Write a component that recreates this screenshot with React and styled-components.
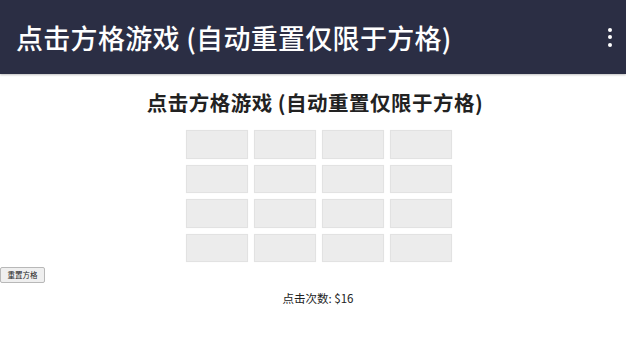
import React, { useState } from "react";
import styled, { createGlobalStyle } from "styled-components";

const Global = createGlobalStyle`
  html, body { margin: 0; padding: 0; background: #ffffff; }
  body { font-family: "Noto Sans CJK SC", "Noto Sans", sans-serif; }
`;

const Page = styled.div`
  width: 626px;
  height: 359px;
  overflow: hidden;
  background: #fff;
`;

const AppBar = styled.header`
  height: 74px;
  background: #2b2e44;
  display: flex;
  align-items: center;
  justify-content: space-between;
  padding: 0 10px 0 16px;
  box-sizing: border-box;
  box-shadow: 0 1px 2px rgba(0,0,0,0.25);
`;

const AppTitle = styled.h1`
  margin: 0;
  color: #ffffff;
  font-family: "Noto Sans CJK SC", sans-serif;
  font-weight: 500;
  font-size: 27px;
  letter-spacing: 0.3px;
  line-height: 1;
`;

const Kebab = styled.button`
  background: none;
  border: none;
  padding: 0;
  width: 12px;
  display: flex;
  flex-direction: column;
  align-items: center;
  gap: 3.5px;
  cursor: pointer;
`;

const Dot = styled.span`
  width: 4px;
  height: 4px;
  border-radius: 50%;
  background: #ffffff;
`;

const Main = styled.main`
  display: flex;
  flex-direction: column;
`;

const Center = styled.div`
  display: flex;
  flex-direction: column;
  align-items: center;
  padding-left: ${(p) => p.$shift || 10}px;
`;

const Heading = styled.h2`
  margin: 16px 0 0;
  font-family: "Noto Sans CJK SC", sans-serif;
  font-weight: 700;
  font-size: 20.5px;
  letter-spacing: 0.5px;
  line-height: 24px;
  color: #222;
`;

const Grid = styled.div`
  margin-top: 16px;
  display: grid;
  grid-template-columns: repeat(4, 62px);
  grid-auto-rows: 28.5px;
  column-gap: 6px;
  row-gap: 6px;
`;

const Cell = styled.div`
  box-sizing: border-box;
  background: ${(p) => (p.$on ? "#4caf50" : "#ececec")};
  border: 1px solid #e2e2e2;
  box-shadow: 0 0 1px rgba(0,0,0,0.05);
  cursor: pointer;
`;

const ResetRow = styled.div`
  margin-top: 5px;
  display: flex;
`;

const ResetButton = styled.button`
  height: 16px;
  width: 45px;
  padding: 0;
  font-family: "Noto Sans CJK SC", sans-serif;
  font-size: 7.5px;
  color: #222;
  background: #efefef;
  border: 1px solid #b8b8b8;
  border-radius: 2px;
  line-height: 1;
`;

const Count = styled.p`
  margin: 8px 0 0;
  font-family: "Noto Sans CJK SC", sans-serif;
  font-size: 11.5px;
  color: #222;
  line-height: 14px;
`;

export default function App() {
  const [cells, setCells] = useState(Array(16).fill(false));
  return (
    <Page>
      <Global />
      <AppBar>
        <AppTitle>点击方格游戏 (自动重置仅限于方格)</AppTitle>
        <Kebab aria-label="menu">
          <Dot />
          <Dot />
          <Dot />
        </Kebab>
      </AppBar>
      <Main>
        <Center $shift={4}>
          <Heading>点击方格游戏 (自动重置仅限于方格)</Heading>
        </Center>
        <Center $shift={12}>
          <Grid>
            {cells.map((on, i) => (
              <Cell key={i} $on={on} onClick={() => setCells((c) => c.map((v, j) => (j === i ? !v : v)))} />
            ))}
          </Grid>
        </Center>
        <ResetRow>
          <ResetButton onClick={() => setCells(Array(16).fill(false))}>重置方格</ResetButton>
        </ResetRow>
        <Center $shift={10}>
          <Count>点击次数: $16</Count>
        </Center>
      </Main>
    </Page>
  );
}
